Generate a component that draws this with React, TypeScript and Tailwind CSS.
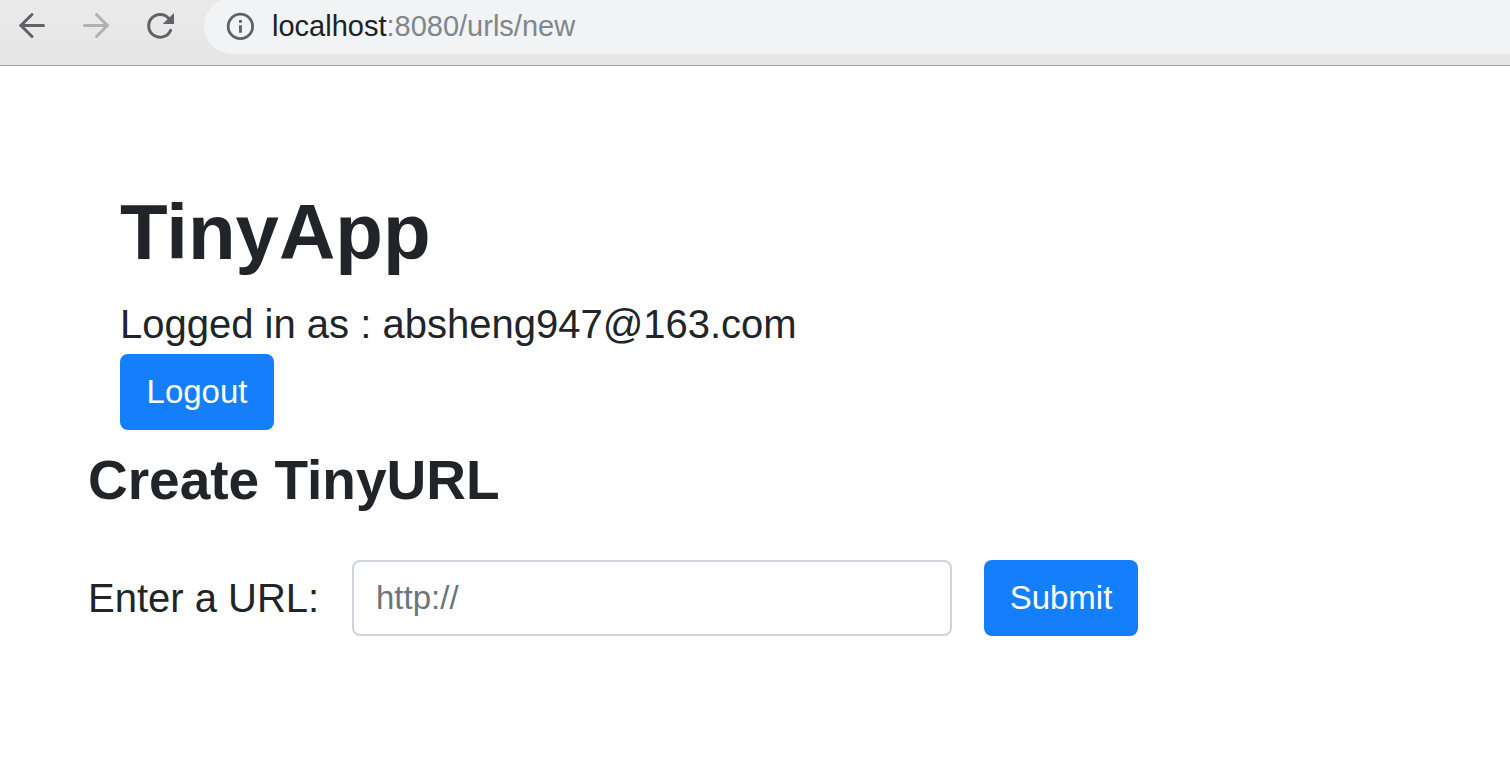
import React, { useState } from "react";

function BackIcon() {
  return (
    <svg viewBox="0 0 32 32" className="size-8" fill="none" stroke="#5f6368" strokeWidth="3" strokeLinecap="round" aria-hidden="true">
      <path d="M27.5 15.5H5" />
      <path d="M16 4.5L4.9 15.5L16 26.5" strokeLinejoin="miter" />
    </svg>
  );
}

function ForwardIcon() {
  return (
    <svg viewBox="0 0 32 32" className="size-8" fill="none" stroke="#b0b1b2" strokeWidth="3" strokeLinecap="round" aria-hidden="true">
      <path d="M4.5 15.5H27" />
      <path d="M16.5 4.5L27.3 15.5L16.5 26.5" strokeLinejoin="miter" />
    </svg>
  );
}

function ReloadIcon() {
  return (
    <svg viewBox="0 0 32 32" className="size-8" fill="none" aria-hidden="true">
      <path d="M26.6 20.3A11.4 11.4 0 1 1 24.6 8.2" stroke="#5f6368" strokeWidth="3" strokeLinecap="round" />
      <path d="M30 3V14H18.7Z" fill="#5f6368" />
    </svg>
  );
}

function InfoIcon() {
  return (
    <svg viewBox="0 0 28 28" className="size-7" fill="none" aria-hidden="true">
      <circle cx="14.4" cy="14.4" r="12.2" stroke="#5f6368" strokeWidth="2.8" />
      <path d="M13 8h2.9v2.8H13zM13 13.2h2.9v7.6H13z" fill="#5f6368" />
    </svg>
  );
}

function BrowserBar() {
  return (
    <header className="flex h-[66px] items-start overflow-hidden border-b border-[#9d9d9d] bg-linear-to-b from-[#eaeaea] to-[#e6e6e6] pl-4">
      <nav aria-label="Browser" className="flex gap-8 pt-[10px]">
        <button type="button" aria-label="Back"><BackIcon /></button>
        <button type="button" aria-label="Forward" disabled><ForwardIcon /></button>
        <button type="button" aria-label="Reload"><ReloadIcon /></button>
      </nav>
      <div className="-mt-0.5 ml-7 flex h-14 flex-1 items-center gap-[18px] rounded-l-full bg-[#f1f3f4] pl-[22px]">
        <button type="button" aria-label="Site information"><InfoIcon /></button>
        <p className="text-[29px] leading-8 text-[#80868b]">
          <span className="text-[#202124]">localhost</span>:8080/urls/new
        </p>
      </div>
    </header>
  );
}

const primaryButton =
  "h-[76px] min-w-[154px] rounded-lg bg-[#157efb] px-6 text-[33px] leading-[48px] text-white";

export default function App() {
  const [url, setUrl] = useState("");
  return (
    <div className="min-h-screen bg-white font-['Liberation_Sans',Arial,sans-serif] text-[#212529]">
      <BrowserBar />
      <main className="px-[88px] pt-[118px]">
        <section className="px-8">
          <h1 className="text-[78px] leading-[96px] font-bold">TinyApp</h1>
          <p className="mt-[14px] text-[40px] leading-[60px]">Logged in as : absheng947@163.com</p>
          <button type="button" className={primaryButton}>Logout</button>
        </section>
        <h2 className="mt-4 text-[55px] leading-[68px] font-bold">Create TinyURL</h2>
        <form className="mt-[46px] flex items-center gap-8" onSubmit={(e) => e.preventDefault()}>
          <label htmlFor="url" className="min-w-[232px] text-[40px] leading-[60px] whitespace-nowrap">Enter a URL:</label>
          <input
            id="url"
            name="url"
            type="text"
            value={url}
            onChange={(e) => setUrl(e.target.value)}
            placeholder="http://"
            className="h-[76px] w-[600px] min-w-0 rounded-lg border-2 border-[#ced4da] px-[22px] text-[33px] leading-[48px] placeholder:text-[#6c757d]"
          />
          <button type="submit" className={primaryButton}>Submit</button>
        </form>
      </main>
    </div>
  );
}
